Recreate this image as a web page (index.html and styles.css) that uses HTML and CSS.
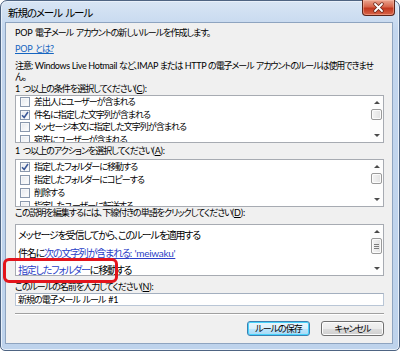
FILE: index.html
```html
<!DOCTYPE html>
<html lang="ja">
<head>
<meta charset="utf-8">
<title>新規のメール ルール</title>
<link rel="stylesheet" href="styles.css">
</head>
<body>
<div class="window">
  <div class="titlebar">
    <span class="title">新規のメール ルール</span>
    <div class="close">
      <svg width="13" height="11" viewBox="0 0 13 11"><path d="M3 2 L10 9 M10 2 L3 9" stroke="#6b2a1e" stroke-width="3.4" stroke-linecap="round"/><path d="M3 2 L10 9 M10 2 L3 9" stroke="#ffffff" stroke-width="1.8" stroke-linecap="round"/></svg>
    </div>
  </div>
  <div class="client">
    <p class="line intro"><span class="en">POP </span>電子メール アカウントの新しいルールを作成します。</p>
    <p class="line help"><a class="link"><span class="en">POP </span>とは<span class="en">?</span></a></p>
    <p class="note">注意<span class="en">: Windows Live Hotmail </span>など、<span class="en">IMAP </span>または <span class="en">HTTP </span>の電子メール アカウントのルールは使用できませ<br>ん。</p>
    <p class="line label"><span class="en">1 </span>つ以上の条件を選択してください<span class="en">(<u>C</u>):</span></p>
    <div class="listbox">
      <div class="items first">
        <div class="row"><span class="check"></span>差出人にユーザーが含まれる</div>
        <div class="row"><span class="check checked"><svg width="8" height="8" viewBox="0 0 8 8"><path d="M1 4.2 L3.2 6.5 L7 1" fill="none" stroke="#3d5a98" stroke-width="1.6"/></svg></span>件名に指定した文字列が含まれる</div>
        <div class="row"><span class="check"></span>メッセージ本文に指定した文字列が含まれる</div>
        <div class="row"><span class="check"></span>宛先にユーザーが含まれる</div>
      </div>
      <div class="scrollbar">
        <span class="arrow up"></span>
        <span class="thumb"></span>
        <span class="arrow down"></span>
      </div>
    </div>
    <p class="line label label-a"><span class="en">1 </span>つ以上のアクションを選択してください<span class="en">(<u>A</u>):</span></p>
    <div class="listbox list-a">
      <div class="items second">
        <div class="row"><span class="check checked"><svg width="8" height="8" viewBox="0 0 8 8"><path d="M1 4.2 L3.2 6.5 L7 1" fill="none" stroke="#3d5a98" stroke-width="1.6"/></svg></span>指定したフォルダーに移動する</div>
        <div class="row"><span class="check"></span>指定したフォルダーにコピーする</div>
        <div class="row"><span class="check"></span>削除する</div>
        <div class="row"><span class="check"></span>指定したユーザーに転送する</div>
      </div>
      <div class="scrollbar">
        <span class="arrow up"></span>
        <span class="thumb"></span>
        <span class="arrow down"></span>
      </div>
    </div>
    <p class="line label label-d">この説明を編集するには、下線付きの単語をクリックしてください<span class="en">(<u>D</u>):</span></p>
    <div class="listbox desc">
      <div class="items desc-text">
        <div class="dline">メッセージを受信してから、このルールを適用する</div>
        <div class="dline">件名に<a class="dlink">次の文字列が含まれる<span class="en">: 'meiwaku'</span></a></div>
        <div class="dline"><a class="dlink">指定したフォルダー</a>に移動する</div>
      </div>
      <div class="scrollbar">
        <span class="arrow up"></span>
        <span class="thumb big"><i></i><i></i><i></i></span>
        <span class="arrow down"></span>
      </div>
    </div>
    <p class="line label label-n">このルールの名前を入力してください<span class="en">(<u>N</u>):</span></p>
    <div class="textbox">新規の電子メール ルール <span class="en">#1</span></div>
    <div class="separator"></div>
    <div class="buttons">
      <button class="btn default">ルールの保存</button>
      <button class="btn">キャンセル</button>
    </div>
  </div>
  <div class="highlight"></div>
</div>
</body>
</html>
```

FILE: styles.css
```css
* { box-sizing: border-box; }
html, body { margin: 0; padding: 0; }
body {
  width: 400px;
  height: 351px;
  overflow: hidden;
  background: #ffffff;
  font-family: "Lato", "Noto Sans CJK JP", sans-serif;
  font-size: 9px;
  letter-spacing: -1px;
  word-spacing: 1.5px;
  font-feature-settings: "palt";
  color: #000;
}
.en { letter-spacing: -0.15px; word-spacing: 0.5px; }
.window {
  position: relative;
  width: 400px;
  height: 351px;
  border: 1px solid #4e6482;
  border-radius: 7px 7px 5px 5px;
  background: linear-gradient(#d8e5f4, #c3d6ee 30px, #bed3ec);
  padding: 0 6px 6px 4px;
  display: flex;
  flex-direction: column;
  box-shadow: inset 0 0 0 1px #e8f0fa;
}
.titlebar {
  height: 21px;
  flex: none;
  display: flex;
  align-items: center;
  justify-content: space-between;
}
.title {
  font-size: 10.5px;
  letter-spacing: -1.1px;
  word-spacing: 2px;
  padding-left: 3px;
  margin-top: 1px;
  color: #000;
}
.close {
  align-self: flex-start;
  width: 33px;
  height: 16px;
  margin-right: -2px;
  margin-top: -1px;
  border: 1px solid #5a241a;
  border-top: none;
  border-radius: 0 0 4px 4px;
  background: linear-gradient(#eaa58f, #d7664c 45%, #c2381f 55%, #d86549);
  box-shadow: inset 0 0 0 1px rgba(255,200,180,0.45);
  display: flex;
  align-items: center;
  justify-content: center;
}
.client {
  flex: 1;
  background: #f0f0f0;
  border: 1px solid #8ea4c0;
  padding: 4px 8px 0 9px;
  display: flex;
  flex-direction: column;
}
p { margin: 0; }
.line { height: 12px; line-height: 12px; white-space: nowrap; }
.help { margin-top: 4px; }
.link { color: #1565c0; text-decoration: underline; }
.note {
  margin-top: 5px;
  line-height: 11px;
  height: 22px;
  white-space: nowrap;
  letter-spacing: -1.05px;
  word-spacing: 1px;
}
.note .en { letter-spacing: -0.35px; word-spacing: 0; }
.label { margin-top: 1px; }
.label-a { margin-top: 2px; }
.label-d { margin-top: 0; }
.label-n { margin-top: 5px; }
u { text-decoration: underline; }
.listbox {
  height: 48px;
  flex: none;
  background: #fff;
  border: 1px solid #a7abb2;
  display: flex;
  overflow: hidden;
}
.list-a { margin-top: 2px; }
.desc { margin-top: 5px; height: 52px; }
.items {
  flex: 1;
  overflow: hidden;
  padding-left: 4px;
}
.row {
  height: 12.5px;
  line-height: 12.5px;
  display: flex;
  align-items: center;
  white-space: nowrap;
}
.second .row { height: 13px; line-height: 13px; }
.check {
  width: 10px;
  height: 10px;
  flex: none;
  margin-right: 4px;
  border: 1px solid #8a98ad;
  background: linear-gradient(135deg, #e4e7ec, #ffffff);
  box-shadow: inset 0 0 0 1px #f6f7f9;
  display: flex;
  align-items: center;
  justify-content: center;
}
.desc-text { padding: 2px 0 0 2px; font-size: 10px; letter-spacing: -1.2px; }
.desc-text .en { letter-spacing: -0.3px; }
.dline { height: 17.5px; line-height: 17.5px; white-space: nowrap; }
.dlink { color: #2b3fc7; text-decoration: underline; }
.scrollbar {
  width: 13px;
  flex: none;
  display: flex;
  flex-direction: column;
  align-items: center;
  background: #fdfdfd;
}
.arrow {
  width: 0;
  height: 0;
  border-left: 3px solid transparent;
  border-right: 3px solid transparent;
  flex: none;
}
.arrow.up { border-bottom: 3px solid #4a4a4a; margin-top: 5px; }
.arrow.down { border-top: 3px solid #4a4a4a; margin-top: auto; margin-bottom: 5px; }
.thumb {
  width: 11px;
  height: 11px;
  margin-top: 5px;
  border: 1px solid #9a9a9a;
  border-radius: 2px;
  background: linear-gradient(90deg, #f4f4f4, #e2e2e2);
  box-shadow: inset 0 0 0 1px #fbfbfb;
  display: flex;
  flex-direction: column;
  align-items: center;
  justify-content: center;
  gap: 1px;
}
.thumb.big { height: 16px; }
.thumb i {
  display: block;
  width: 5px;
  height: 1px;
  background: #7c7c7c;
}
.textbox {
  height: 13px;
  flex: none;
  background: #fff;
  border: 1px solid #b9c6d6;
  border-top-color: #a3afbf;
  padding-left: 2px;
  line-height: 11px;
  white-space: nowrap;
}
.separator {
  margin-top: 7px;
  height: 2px;
  border-top: 1px solid #a0a0a0;
  border-bottom: 1px solid #ffffff;
  flex: none;
}
.buttons {
  margin-top: 6px;
  display: flex;
  justify-content: flex-end;
  gap: 11px;
}
.btn {
  width: 63px;
  height: 15px;
  padding: 0;
  font: inherit;
  letter-spacing: inherit;
  line-height: 12px;
  color: #000;
  border: 1px solid #707070;
  border-radius: 3px;
  background: linear-gradient(#f2f2f2, #ebebeb 50%, #dddddd 51%, #cfcfcf);
  box-shadow: inset 0 0 0 1px #fcfcfc;
}
.btn.default {
  border-color: #3c7fb1;
  background: linear-gradient(#eaf6fd, #d9f0fc 50%, #bee6fd 51%, #a7d9f5);
  box-shadow: inset 0 0 0 1px #48d3fb;
}
.highlight {
  position: absolute;
  left: 2px;
  top: 257px;
  width: 115px;
  height: 25px;
  border: 3px solid #e3141c;
  border-radius: 6px;
}
```
